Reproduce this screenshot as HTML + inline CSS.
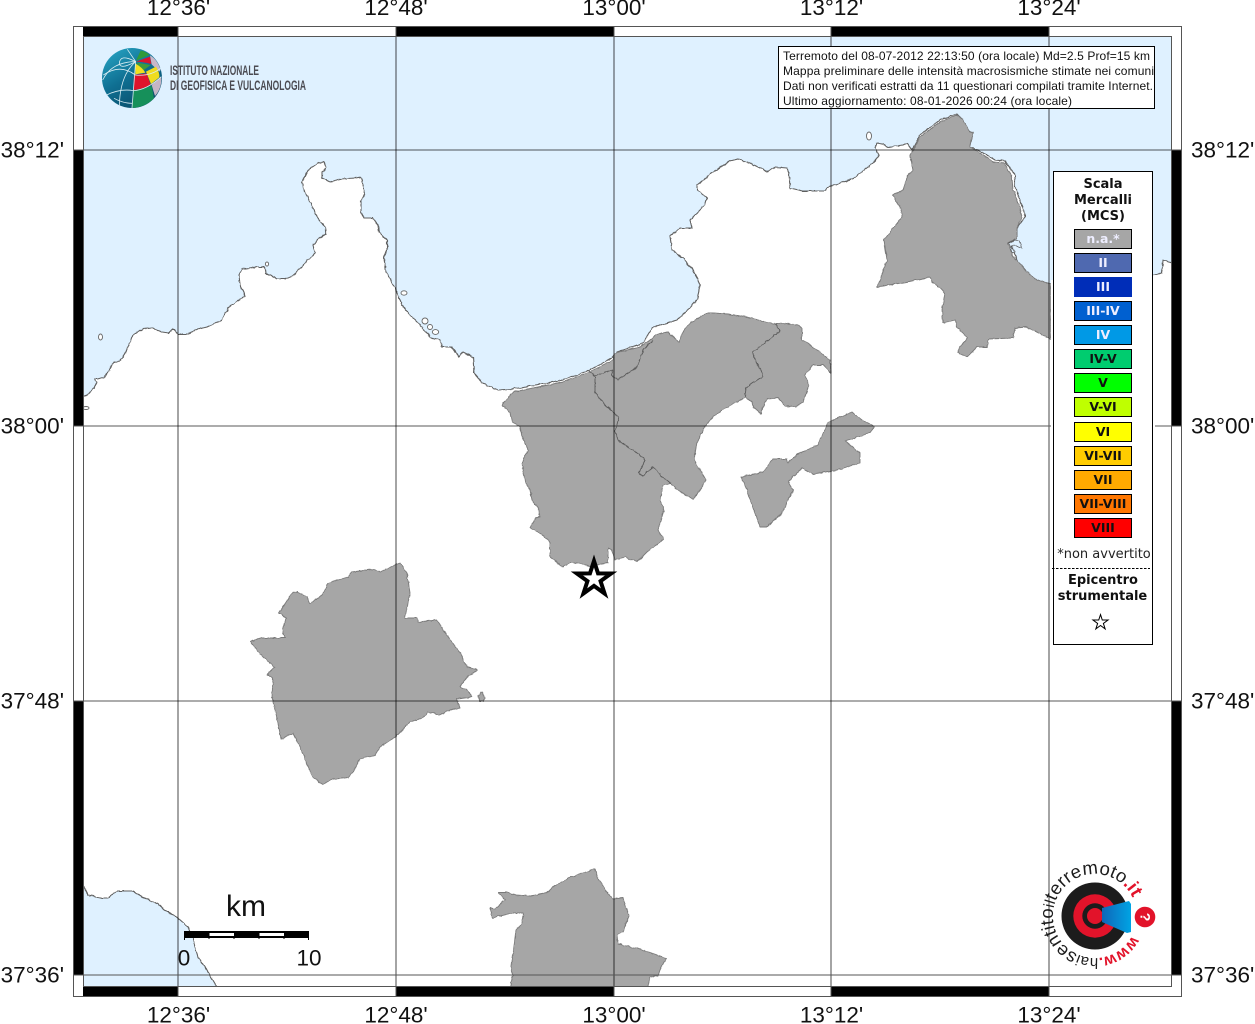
<!DOCTYPE html>
<html>
<head>
<meta charset="utf-8">
<style>
html,body{margin:0;padding:0;background:#fff;width:1255px;height:1024px;overflow:hidden}
svg{display:block}
.t{font-family:"Liberation Sans",sans-serif;font-size:22.500px;fill:#111}
.l{font-family:"DejaVu Sans",sans-serif;font-weight:bold;font-size:12.5px;text-anchor:middle;fill:#111}
.w{fill:#eef}
.h{font-family:"DejaVu Sans",sans-serif;font-weight:bold;font-size:13px;text-anchor:middle;fill:#111}
.i{font-family:"Liberation Sans",sans-serif;font-size:12px;fill:#111}
.g{fill:#a6a6a6;stroke:#7a7a7a;stroke-width:.9;stroke-linejoin:round}
.b{fill:none;stroke:#555;stroke-width:1}
</style>
</head>
<body>
<svg width="1255" height="1024" viewBox="0 0 1255 1024" xmlns="http://www.w3.org/2000/svg">
<defs>
<clipPath id="map"><rect x="83" y="36" width="1089" height="951"/></clipPath>
<clipPath id="info"><rect x="778" y="46" width="377" height="62"/></clipPath>
<linearGradient id="teal" x1="0" y1="0" x2=".6" y2="1"><stop offset="0" stop-color="#2aa9c8"/><stop offset=".55" stop-color="#0f6f92"/><stop offset="1" stop-color="#0b4f6c"/></linearGradient>
<linearGradient id="cone" x1="0" y1="0" x2="1" y2="0"><stop offset="0" stop-color="#0f66b8"/><stop offset="1" stop-color="#00a4e4"/></linearGradient>
<path id="ring" d="M1132,935.7 A42,42 0 1 1 1132,896.3"/>
<filter id="rough" x="-5%" y="-5%" width="110%" height="110%"><feTurbulence type="fractalNoise" baseFrequency=".22" numOctaves="2" seed="4"/><feDisplacementMap in="SourceGraphic" scale="2.6" xChannelSelector="R" yChannelSelector="G"/></filter>
</defs>

<g clip-path="url(#map)">
<path filter="url(#rough)" fill="#dff1ff" stroke="#5e5e5e" stroke-width="1.100" stroke-linejoin="round" d="M83,398 L75,402 L90,393 97,383 95,379 98,379 105,377 110,368 114,362 120,361 125,354 130,342 133,335 143,329 152,328 162,332 169,333 173,329 178,334 188,334 195,330 207,327 222,320 228,308 237,301 245,296 240,285 239,275 242,269 257,267 265,267 266,273 277,279 285,279 293,276 315,253 313,245 318,239 326,234 325,228 318,218 313,208 303,188 302,182 308,170 318,163 324,162 326,167 322,172 322,178 330,182 340,179 355,178 361,177 363,185 365,193 361,200 361,212 364,218 373,218 378,225 379,232 387,240 387,250 384,258 386,272 395,288 402,305 410,315 422,327 430,337 440,340 442,347 452,347 459,357 463,352 473,357 474,373 482,383 498,390 513,389 563,380 590,370 613,357 617,352 643,343 653,327 677,320 688,310 697,300 700,285 693,270 683,258 672,250 670,236 680,228 692,228 690,220 705,205 707,198 697,190 697,185 713,172 730,161 738,159 750,163 768,172 775,167 787,168 789,173 790,188 803,191 825,191 828,187 853,179 873,163 879,155 875,148 877,143 882,144 888,147 903,145 907,143 912,150 920,135 940,120 957,114 963,120 967,130 973,133 970,147 982,152 995,160 1005,161 1015,175 1015,187 1023,208 1025,217 1017,228 1017,238 1010,242 1017,260 1027,272 1037,280 1050,284 1155,275 1162,273 1163,260 1172,263 L1182,266 1182,20 75,20 Z"/>
<path filter="url(#rough)" fill="#dff1ff" stroke="#5e5e5e" stroke-width="1.100" stroke-linejoin="round" d="M75,880 L83,885 88,895 103,898 108,898 117,891 132,891 143,897 160,905 163,909 178,918 188,927 193,940 198,957 207,970 217,987 225,1000 75,1000 Z"/>
<g fill="#fff" stroke="#666" stroke-width=".9">
<ellipse cx="100.500" cy="337" rx="2" ry="3"/>
<ellipse cx="267" cy="264" rx="1.600" ry="2"/>
<ellipse cx="404" cy="293" rx="3" ry="2.200"/>
<ellipse cx="425" cy="321" rx="3" ry="3"/>
<ellipse cx="430" cy="327" rx="2.500" ry="2.500"/>
<ellipse cx="435.500" cy="332" rx="3.200" ry="2.400"/>
<ellipse cx="869" cy="136" rx="2.500" ry="4"/>
<ellipse cx="86" cy="408" rx="3" ry="1.500"/>
</g>

<rect x="1051" y="300" width="104" height="350" fill="#fff"/>

<g filter="url(#rough)">
<path class="g" d="M502,405 L510,395 513,392 563,382 590,372 613,360 615,353 640,347 653,338 655,335 662,333 668,332 679,342 682,333 690,323 707,313 713,313 728,314 747,317 773,324 777,324 782,323 798,325 802,328 802,340 808,343 830,360 831,373 823,365 813,365 805,375 809,385 803,402 795,407 785,406 778,398 767,399 763,407 761,414 753,407 752,402 745,397 737,402 727,407 713,417 705,426 697,442 694,460 702,473 706,480 700,490 693,499 682,493 670,483 663,485 660,500 664,510 658,530 664,539 647,552 637,562 625,557 615,560 612,550 608,548 608,563 590,566 572,562 563,567 550,557 550,542 540,533 530,528 535,518 540,517 538,508 532,500 530,490 525,482 522,463 528,450 522,437 520,426 512,422 510,413 Z"/>
<g fill="none" stroke="#5a5a5a" stroke-width=".9" stroke-linejoin="round">
<path d="M589,371 595,376 595,393 605,405 619,417 615,432 618,440 637,453 645,460 639,473 642,476 653,467 662,477 671,483"/>
<path d="M595,376 612,370 613,377 618,380 637,367 643,350 653,340"/>
<path d="M775,323 780,331 753,352 753,355 763,376 746,388 745,397"/>
</g>
<path class="g" d="M741,477 L763,472 773,459 787,459 788,463 798,454 818,445 828,422 852,412 862,420 874,426 870,433 845,441 860,453 860,463 837,470 813,474 802,468 788,482 793,490 782,513 767,527 760,527 753,508 747,490 Z"/>
<path class="g" d="M250,642 L260,638 285,638 283,630 286,618 279,613 292,593 297,592 307,597 310,604 322,595 328,583 348,577 352,572 375,569 380,572 395,565 400,563 407,573 410,593 405,618 417,618 418,622 437,620 447,635 460,653 467,667 478,670 467,677 460,687 467,690 472,697 457,699 460,708 450,710 440,715 428,712 423,718 410,722 395,737 380,747 375,755 360,759 353,772 348,778 333,779 323,784 313,778 300,747 293,733 281,739 278,723 272,697 273,678 267,675 275,667 263,657 Z"/>
<path class="g" d="M481,692 L483,693 484.500,698 484,701 479,701 478.500,696 Z"/>
<path class="g" d="M490,908 L495,909 505,900 498,892 507,892 515,895 530,896 547,893 555,885 563,882 568,878 595,869 598,878 612,899 623,898 629,916 623,932 617,935 618,944 640,949 666,958 660,970 658,976 650,977 648,986 648,990 508,990 510,987 513,975 511,970 516,930 522,923 523,913 512,913 493,918 Z"/>
<path class="g" d="M913,150 L920,137 940,122 957,115 963,120 970,132 973,133 970,147 980,153 993,162 1005,163 1012,178 1013,190 1020,207 1022,217 1017,228 1017,238 1008,243 1013,257 1017,260 1027,272 1037,280 1051,284 1051,339 1027,327 1015,328 1013,338 988,339 987,347 977,347 967,357 957,352 967,338 957,327 955,320 943,323 942,310 945,293 942,289 932,282 930,277 907,282 877,287 883,272 887,260 884,240 902,217 900,207 892,195 903,190 908,175 913,170 910,155 Z"/>
<path fill="#dff1ff" stroke="#555" stroke-width=".7" d="M1009,243 L1015,240 1019,241 1022,248 1018,247 1014,245 1011,247 1015,252 1012,253 Z"/>
</g>
<rect x="1051" y="280" width="2" height="70" fill="#fff"/>
</g>

<g stroke="#000" stroke-opacity=".65" stroke-width="1.100" fill="none">
<path d="M178,26V997M396,26V997M614,26V997M831,26V997M1049,26V997"/>
<path d="M73,150H1051M73,426H1051M73,701H1182M73,975H1182M1155,426H1182M1051,150H1182"/>
</g>
<rect x="1051" y="420" width="104" height="12" fill="#fff"/>
<path d="M1049,420V432" stroke="#666" stroke-width="1.100"/>

<rect x="73" y="26" width="1109" height="10" fill="#fff"/>
<rect x="73" y="987" width="1109" height="10" fill="#fff"/>
<rect x="73" y="36" width="10" height="951" fill="#fff"/>
<rect x="1172" y="36" width="10" height="951" fill="#fff"/>
<path fill="#000" d="M83,26H178V36H83ZM396,26H614V36H396ZM831,26H1049V36H831ZM83,987H178V997H83ZM396,987H614V997H396ZM831,987H1049V997H831ZM73,150H83V426H73ZM73,701H83V975H73ZM1172,150H1182V426H1172ZM1172,701H1182V975H1172Z"/>
<rect class="b" x="73.500" y="26.500" width="1108" height="970"/>
<rect class="b" x="83.500" y="36.500" width="1088" height="950"/>
<path d="M73,975H1182" stroke="#555" stroke-width="1"/>
<path d="M178,26V36M396,26V36M614,26V36M831,26V36M1049,26V36M178,987V997M396,987V997M614,987V997M831,987V997M1049,987V997M73,150H83M73,426H83M73,701H83M1172,150H1182M1172,426H1182M1172,701H1182" stroke="#555" stroke-width="1"/>

<g text-anchor="middle">
<text x="178.500" y="15" class="t">12°36'</text><text x="396" y="15" class="t">12°48'</text><text x="614" y="15" class="t">13°00'</text><text x="831.500" y="15" class="t">13°12'</text><text x="1049" y="15" class="t">13°24'</text>
<text x="178.500" y="1022.500" class="t">12°36'</text><text x="396" y="1022.500" class="t">12°48'</text><text x="614" y="1022.500" class="t">13°00'</text><text x="831.500" y="1022.500" class="t">13°12'</text><text x="1049" y="1022.500" class="t">13°24'</text>
</g>
<g text-anchor="end">
<text x="64" y="157.500" class="t">38°12'</text><text x="64" y="433.500" class="t">38°00'</text><text x="64" y="708.500" class="t">37°48'</text><text x="64" y="982.500" class="t">37°36'</text>
</g>
<g>
<text x="1191" y="157.500" class="t">38°12'</text><text x="1191" y="433.500" class="t">38°00'</text><text x="1191" y="708.500" class="t">37°48'</text><text x="1191" y="982.500" class="t">37°36'</text>
</g>

<!-- INGV logo -->
<g transform="translate(70,20) scale(.3333)">
<circle cx="186" cy="174" r="90" fill="url(#teal)"/>
<path fill="#2f9a3a" d="M198,122 L212,92 Q230,95 238,105 Z"/>
<path fill="#d9142e" d="M198,125 L240,110 L244,132 Q215,125 198,125 Z"/>
<path fill="#c9b8c8" d="M240,106 Q262,118 272,150 L268,155 L245,133 Z"/>
<path fill="#3f9a3a" d="M200,128 L242,135 L215,155 Z"/>
<path fill="#f2e020" d="M196,130 Q220,145 226,158 L196,163 Z"/>
<path fill="#f0dc20" d="M228,155 L258,140 Q270,160 268,172 L243,192 Z"/>
<path fill="#e0142c" d="M192,165 L230,160 L242,195 Q215,208 190,210 Z"/>
<path fill="#c5b5c5" d="M245,195 L274,170 Q276,205 255,228 Z"/>
<path fill="#16905a" d="M190,212 L245,198 L252,235 Q225,262 186,264 Z"/>
<g fill="none" stroke="#d8ecf2" stroke-width="2.400">
<path d="M172,88 L197,125 L186,264"/>
<path d="M197,125 Q150,165 148,258"/>
<path d="M197,125 Q125,125 98,180"/>
<path d="M197,125 Q150,100 148,130 Q150,150 197,125"/>
<path d="M100,165 Q150,130 196,165 Q240,170 272,145"/>
<path d="M110,225 Q150,205 190,212 Q230,210 274,170"/>
<path d="M132,235 Q160,250 186,250"/>
</g>
</g>
<text x="170" y="75" textLength="89" lengthAdjust="spacingAndGlyphs" font-family="Liberation Sans, sans-serif" font-weight="bold" font-size="13.500" fill="#4b4b52">ISTITUTO NAZIONALE</text>
<text x="170" y="90" textLength="136" lengthAdjust="spacingAndGlyphs" font-family="Liberation Sans, sans-serif" font-weight="bold" font-size="13.500" fill="#4b4b52">DI GEOFISICA E VULCANOLOGIA</text>

<!-- info box -->
<rect x="778.500" y="46.500" width="376" height="62" fill="#fff" stroke="#000" stroke-width="1"/>
<g clip-path="url(#info)">
<text class="i" x="783" y="60" textLength="367">Terremoto del 08-07-2012 22:13:50 (ora locale) Md=2.5 Prof=15 km</text>
<text class="i" x="783" y="75" textLength="371">Mappa preliminare delle intensità macrosismiche stimate nei comuni</text>
<text class="i" x="783" y="90" textLength="370">Dati non verificati estratti da 11 questionari compilati tramite Internet.</text>
<text class="i" x="783" y="105" textLength="289">Ultimo aggiornamento: 08-01-2026 00:24 (ora locale)</text>
</g>

<!-- legend -->
<rect x="1053.500" y="171.500" width="99" height="473" fill="#fff" stroke="#000" stroke-width="1"/>
<text class="h" x="1103" y="188">Scala</text>
<text class="h" x="1103" y="204">Mercalli</text>
<text class="h" x="1103" y="220">(MCS)</text>
<g stroke="#000" stroke-width="1">
<rect x="1074.500" y="229.500" width="57" height="19" fill="#a6a6a6"/>
<rect x="1074.500" y="253.500" width="57" height="19" fill="#4f69b0"/>
<rect x="1074.500" y="277.500" width="57" height="19" fill="#002db8" stroke="#002db8"/>
<rect x="1074.500" y="301.500" width="57" height="19" fill="#0060d0"/>
<rect x="1074.500" y="325.500" width="57" height="19" fill="#0099e6"/>
<rect x="1074.500" y="349.500" width="57" height="19" fill="#00cc6f"/>
<rect x="1074.500" y="373.500" width="57" height="19" fill="#00ff00"/>
<rect x="1074.500" y="397.500" width="57" height="19" fill="#bfff00"/>
<rect x="1074.500" y="422.500" width="57" height="19" fill="#ffff00"/>
<rect x="1074.500" y="446.500" width="57" height="19" fill="#ffcc00"/>
<rect x="1074.500" y="470.500" width="57" height="19" fill="#ffaa00"/>
<rect x="1074.500" y="494.500" width="57" height="19" fill="#ff7700"/>
<rect x="1074.500" y="518.500" width="57" height="19" fill="#ff0000"/>
</g>
<text class="l w" x="1103" y="243">n.a.*</text>
<text class="l w" x="1103" y="267">II</text>
<text class="l w" x="1103" y="291">III</text>
<text class="l w" x="1103" y="315">III-IV</text>
<text class="l w" x="1103" y="339">IV</text>
<text class="l" x="1103" y="363">IV-V</text>
<text class="l" x="1103" y="387">V</text>
<text class="l" x="1103" y="411">V-VI</text>
<text class="l" x="1103" y="436">VI</text>
<text class="l" x="1103" y="460">VI-VII</text>
<text class="l" x="1103" y="484">VII</text>
<text class="l" x="1103" y="508">VII-VIII</text>
<text class="l" x="1103" y="532">VIII</text>
<text x="1104" y="558" text-anchor="middle" font-family="DejaVu Sans, sans-serif" font-size="13" fill="#222">*non avvertito</text>
<path d="M1052,568.500H1150" stroke="#000" stroke-width="1" stroke-dasharray="2.500 1.500"/>
<text class="h" x="1103" y="584">Epicentro</text>
<text class="h" x="1102.500" y="600">strumentale</text>
<polygon transform="translate(1100.500,622.500) scale(.44) translate(-594,-579)" points="594,561 598.040,573.430 611.120,573.440 600.540,581.130 604.580,593.560 594,585.880 583.420,593.560 587.460,581.130 576.880,573.440 589.960,573.430" fill="#fff" stroke="#000" stroke-width="2.300" stroke-miterlimit="10"/>

<!-- epicentre -->
<polygon points="594,561 598.040,573.430 611.120,573.440 600.540,581.130 604.580,593.560 594,585.880 583.420,593.560 587.460,581.130 576.880,573.440 589.960,573.430" fill="#fff" stroke="#000" stroke-width="4" stroke-miterlimit="10"/>

<!-- scale bar -->
<text x="246" y="916" text-anchor="middle" font-family="Liberation Sans, sans-serif" font-size="30" fill="#111">km</text>
<rect x="184" y="931" width="125" height="7" fill="#000"/>
<rect x="209.500" y="933" width="24.500" height="3" fill="#fff"/>
<rect x="259.500" y="933" width="24.500" height="3" fill="#fff"/>
<path d="M184.500,931V940M209,936V939M234,936V939M259,936V939M284,936V939M308.500,931V940" stroke="#000" stroke-width="1"/>
<text x="184" y="965.500" text-anchor="middle" class="t">0</text>
<text x="309" y="965.500" text-anchor="middle" class="t">10</text>

<!-- haisentito logo -->
<circle cx="1095" cy="916" r="33.500" fill="#1c1c1c"/>
<circle cx="1095" cy="916" r="21.700" fill="#e2132a"/>
<circle cx="1095" cy="916" r="12.700" fill="#1c1c1c"/>
<circle cx="1095" cy="916" r="8" fill="#e2132a"/>
<polygon points="1102,908 1129,901 1131,904 1131,932 1127,933 1102,922" fill="url(#cone)"/>
<circle cx="1145" cy="917" r="10.300" fill="#e2132a"/>
<text x="0" y="0" transform="translate(1140.500,917) rotate(90)" text-anchor="middle" font-family="Liberation Sans, sans-serif" font-weight="bold" font-size="14" fill="#fff">?</text>
<text font-family="Liberation Sans, sans-serif" font-size="18.500" fill="#1c1c1c"><textPath href="#ring" textLength="224"><tspan fill="#e2132a" font-weight="bold" font-size="16">www.</tspan><tspan font-size="15">hai</tspan><tspan>sentito</tspan><tspan font-size="15">il</tspan><tspan>terremoto</tspan><tspan fill="#e2132a" font-weight="bold">.it</tspan></textPath></text>
</svg>
</body>
</html>
